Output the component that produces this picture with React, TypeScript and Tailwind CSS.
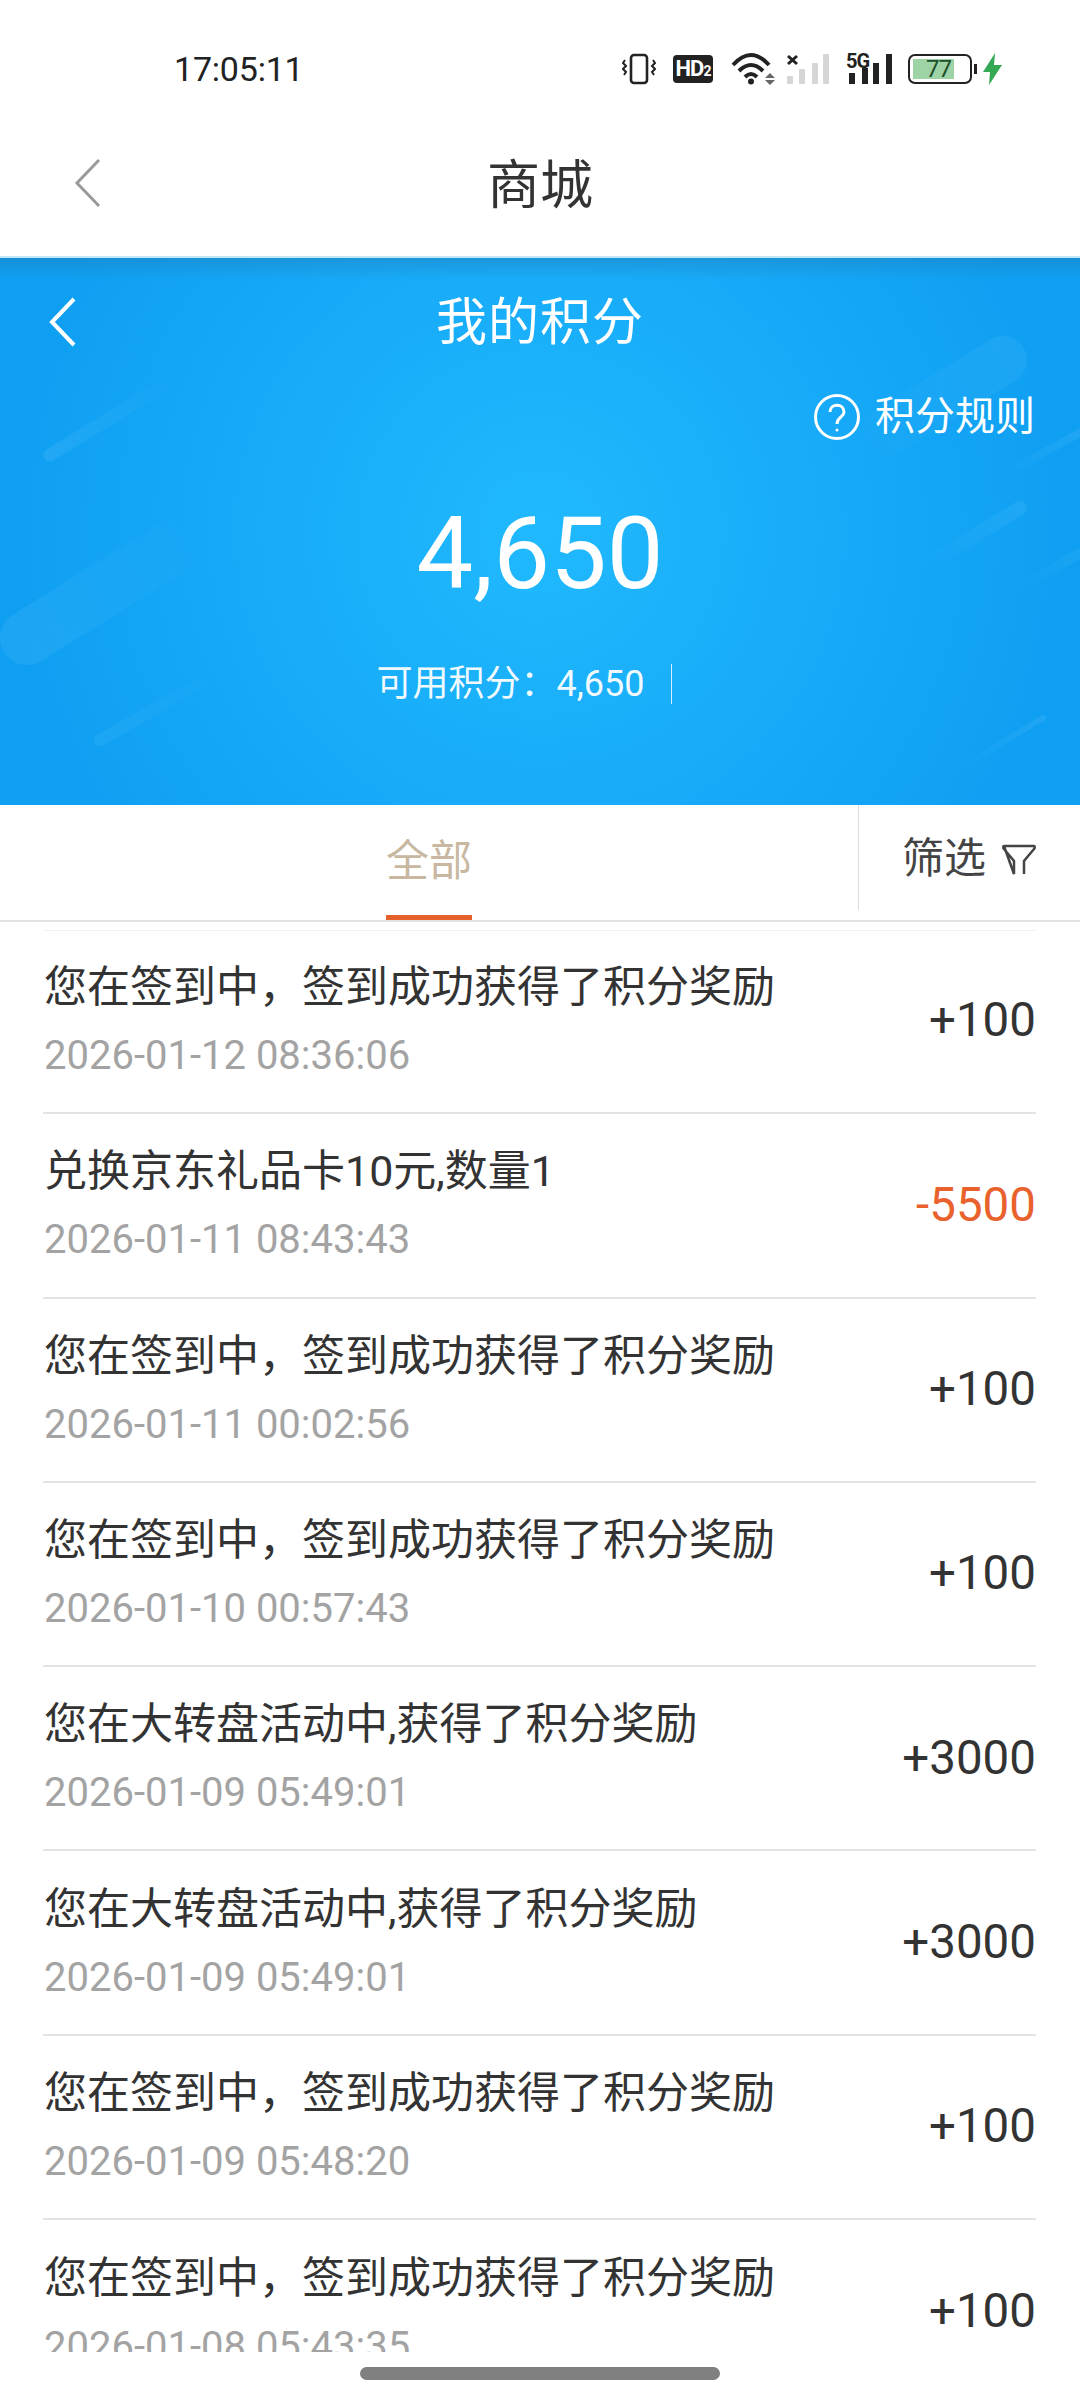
const rows = [
  { title: '您在签到中，签到成功获得了积分奖励', time: '2026-01-12 08:36:06', value: '+100' },
  { title: '兑换京东礼品卡10元,数量1', time: '2026-01-11 08:43:43', value: '-5500' },
  { title: '您在签到中，签到成功获得了积分奖励', time: '2026-01-11 00:02:56', value: '+100' },
  { title: '您在签到中，签到成功获得了积分奖励', time: '2026-01-10 00:57:43', value: '+100' },
  { title: '您在大转盘活动中,获得了积分奖励', time: '2026-01-09 05:49:01', value: '+3000' },
  { title: '您在大转盘活动中,获得了积分奖励', time: '2026-01-09 05:49:01', value: '+3000' },
  { title: '您在签到中，签到成功获得了积分奖励', time: '2026-01-09 05:48:20', value: '+100' },
  { title: '您在签到中，签到成功获得了积分奖励', time: '2026-01-08 05:43:35', value: '+100' },
];

// background streaks: head is the visible end, tail fades out
const streaks = [
  { x1: 50, y1: 197, x2: 172, y2: 122, w: 13, o: 0.07 },
  { x1: 27, y1: 380, x2: 190, y2: 278, w: 54, o: 0.06 },
  { x1: 100, y1: 482, x2: 210, y2: 420, w: 12, o: 0.05 },
  { x1: 1003, y1: 102, x2: 860, y2: 190, w: 48, o: 0.05 },
  { x1: 1085, y1: 172, x2: 1000, y2: 218, w: 8, o: 0.07 },
  { x1: 1020, y1: 250, x2: 930, y2: 305, w: 14, o: 0.06 },
  { x1: 1085, y1: 292, x2: 1020, y2: 330, w: 10, o: 0.05 },
  { x1: 1043, y1: 460, x2: 960, y2: 510, w: 6, o: 0.07 },
];

const StatusIcons = () => (
  <div className="flex items-center h-[34px]">
    <svg width="34" height="34" viewBox="0 0 34 34" fill="none" stroke="#222" strokeWidth="2.6">
      <rect x="9" y="3" width="16" height="28" rx="3" />
      <path d="M3 8l-2 3 3 3-3 3 3 3-2 3M31 8l2 3-3 3 3 3-3 3 2 3" strokeWidth="2" />
    </svg>
    <div className="ml-[17px] w-[40px] h-[28px] rounded-[4px] bg-[#222] text-white text-[22px] font-bold leading-[28px] text-center font-['Roboto'] tracking-[-1px]">
      HD<span className="text-[14px]">2</span>
    </div>
    <svg className="ml-[18px]" width="46" height="34" viewBox="0 0 46 34" fill="none" stroke="#222" strokeWidth="4">
      <path d="M2 13Q20-7 38 13" />
      <path d="M8 19Q20 7 32 19" />
      <path d="M14 25Q20 19 26 25" />
      <circle cx="20" cy="29.5" r="3" fill="#222" stroke="none" />
      <path d="M34 26l5-5 5 5zM34 28h10l-5 5z" fill="#666" stroke="none" />
    </svg>
    <svg className="ml-[10px]" width="44" height="34" viewBox="0 0 44 34">
      <path d="M1 4l9 8M10 4l-9 8" stroke="#222" strokeWidth="3" />
      <rect x="0" y="24" width="6" height="8" rx="1" fill="#d6d6d6" />
      <rect x="12" y="17" width="6" height="15" rx="1" fill="#d6d6d6" />
      <rect x="25" y="11" width="6" height="21" rx="1" fill="#d6d6d6" />
      <rect x="36" y="2" width="6" height="30" rx="1" fill="#d6d6d6" />
    </svg>
    <div className="ml-[15px] relative w-[48px] h-[34px]">
      <span className="absolute left-0 top-[-3px] text-[20px] leading-[24px] font-bold font-['Roboto'] text-[#222] tracking-[-1px]">5G</span>
      <svg className="absolute left-0 top-0" width="48" height="34" viewBox="0 0 48 34">
        <rect x="3" y="21" width="6" height="11" fill="#222" />
        <rect x="16" y="16" width="6" height="16" fill="#222" />
        <rect x="27" y="11" width="6" height="21" fill="#222" />
        <rect x="40" y="2" width="6" height="30" fill="#222" />
      </svg>
    </div>
    <div className="ml-[14px] relative w-[64px] h-[30px] rounded-[7px] border-[2px] border-[#222] p-[3px]">
      <div className="w-[41px] h-full bg-[#9ed3a6] text-[#1d4f2a] text-[24px] leading-[20px] text-right pr-[3px] tracking-[-1px] font-['Roboto']">77</div>
      <div className="absolute right-[-7px] top-[8px] w-[3px] h-[10px] bg-[#222]" />
    </div>
    <svg className="ml-[11px]" width="20" height="32" viewBox="0 0 20 32">
      <path d="M12 0L0 19h7l-1 13L19 12h-8z" fill="#34a853" />
    </svg>
  </div>
);

const Chevron = ({ color, width }: { color: string; width: number }) => (
  <svg width="28" height="50" viewBox="0 0 28 50" fill="none" stroke={color} strokeWidth={width}>
    <path d="M25 2L3 25l22 23" />
  </svg>
);

export default function App() {
  return (
    <div className="w-[1080px] h-[2400px] bg-white overflow-hidden flex flex-col font-['Roboto','Noto_Sans_CJK_SC',sans-serif]">
      <div className="h-[110px] shrink-0 flex items-center justify-between pl-[174px] pr-[77px] pt-[28px]">
        <span className="text-[34px] text-[#222] tracking-[-0.2px]">17:05:11</span>
        <StatusIcons />
      </div>

      <div className="h-[148px] shrink-0 relative flex items-center justify-center pt-[6px] border-b-2 border-[#c5e6f5]">
        <div className="absolute left-[74px] top-[48px]">
          <Chevron color="#9a9a9a" width={3} />
        </div>
        <span className="text-[53px] text-[#333] leading-none">商城</span>
      </div>

      <div className="h-[547px] shrink-0 relative overflow-hidden bg-[radial-gradient(circle_at_50%_50%,#20b9fd_0%,#17aaf8_50%,#0f9ff2_88%)]">
        <div className="absolute inset-x-0 top-0 h-[22px] bg-gradient-to-b from-[#1f7fb8]/45 to-transparent" />
        <svg className="absolute inset-0" width="1080" height="547" viewBox="0 0 1080 547" fill="none" strokeLinecap="round">
          <defs>
            {streaks.map((s, i) => (
              <linearGradient key={i} id={`streak${i}`} gradientUnits="userSpaceOnUse" x1={s.x1} y1={s.y1} x2={s.x2} y2={s.y2}>
                <stop offset="0" stopColor="#fff" stopOpacity={s.o} />
                <stop offset="1" stopColor="#fff" stopOpacity="0" />
              </linearGradient>
            ))}
          </defs>
          {streaks.map((s, i) => (
            <line key={i} x1={s.x1} y1={s.y1} x2={s.x2} y2={s.y2} stroke={`url(#streak${i})`} strokeWidth={s.w} />
          ))}
        </svg>
        <div className="relative h-[80px] mt-[24px] flex items-center justify-center">
          <div className="absolute left-[49px] top-[15px]">
            <Chevron color="#ffffff" width={4} />
          </div>
          <span className="text-[51px] text-white leading-none tracking-[1px]">我的积分</span>
        </div>
        <div className="relative flex items-center justify-end pr-[45px] mt-[30px] h-[50px]">
          <svg width="48" height="48" viewBox="0 0 48 48" fill="none" stroke="#fff" strokeWidth="3">
            <circle cx="24" cy="24" r="21.5" />
            <path d="M17 19c0-9 14-9 14 0 0 5-7 5-7 12" />
            <circle cx="24" cy="37" r="1.5" fill="#fff" stroke="none" />
          </svg>
          <span className="ml-[14px] text-[40px] text-white leading-none">积分规则</span>
        </div>
        <div className="relative mt-[61px] text-center text-[101px] text-white leading-none">4,650</div>
        <div className="relative mt-[60px] flex items-center justify-center pr-[32px]">
          <span className="text-[36px] text-white/95 leading-none">可用积分：4,650</span>
          <div className="ml-[26px] w-px h-[40px] bg-white/80" />
        </div>
      </div>

      <div className="h-[117px] shrink-0 flex border-b-2 border-[#e2e2e2]">
        <div className="w-[858px] flex justify-center">
          <div className="h-full flex flex-col items-center border-b-[5px] border-[#e5602a] w-[86px] justify-center pt-[3px]">
            <span className="text-[43px] text-[#c8b8a2] leading-none">全部</span>
          </div>
        </div>
        <div className="h-[105px] w-px bg-[#dcdcdc]" />
        <div className="flex-1 flex items-center justify-center pb-[8px]">
          <span className="text-[42px] text-[#444] leading-none">筛选</span>
          <svg className="ml-[15px]" width="36" height="36" viewBox="0 0 36 36" fill="none" stroke="#444" strokeWidth="2.5">
            <path d="M3 5h30c1 0 1 2 0 3L23 20v13M13 33V20L3 8c-1-1-1-3 0-3z" />
          </svg>
        </div>
      </div>

      <div className="relative flex-1 overflow-hidden">
        <div className="ml-[43px] mr-[44px] mt-[8px] h-px bg-[#f0f0f0]" />
        <div className="h-[1422px] overflow-hidden mt-[-1px]">
          {rows.map((row, i) => (
            <div key={i} className="h-[184.3px] ml-[43px] mr-[44px] flex items-center justify-between border-b-2 border-[#e4e4e4] last:border-b-0">
              <div className="flex flex-col pb-[2px] pl-[1px]">
                <span className="text-[43px] leading-[50px] text-[#333]">{row.title}</span>
                <span className="mt-[22px] text-[40px] leading-[44px] text-[#a3a3a3]">{row.time}</span>
              </div>
              <span className={`text-[47.5px] leading-none ${row.value.startsWith('-') ? 'text-[#e9612c]' : 'text-[#333]'}`}>{row.value}</span>
            </div>
          ))}
        </div>
        <div className="absolute left-[360px] top-[1445px] w-[360px] h-[13px] rounded-full bg-[#808080]" />
      </div>
    </div>
  );
}
